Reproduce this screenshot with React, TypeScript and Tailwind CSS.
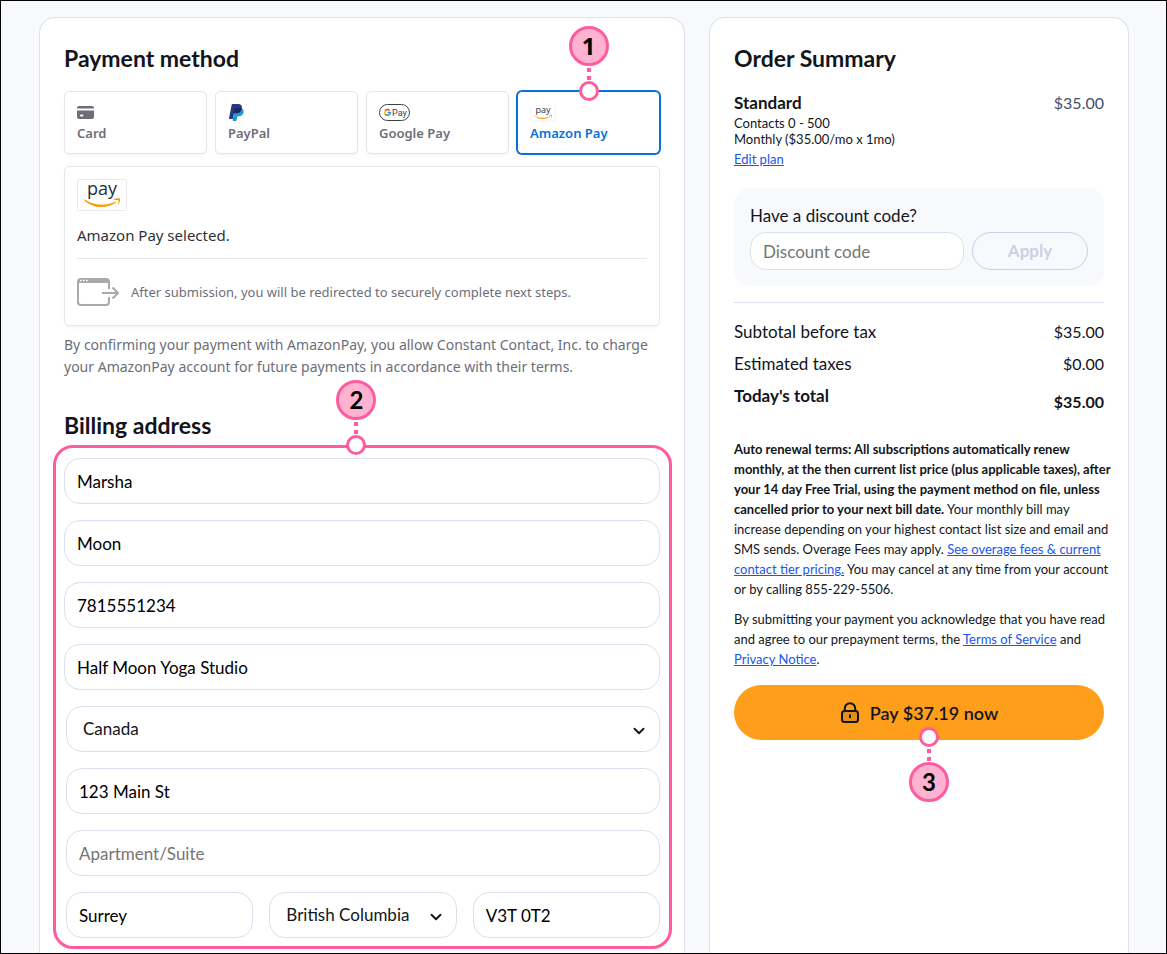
import type { ReactNode } from 'react';
import { ChevronDown } from 'lucide-react';

function CardIcon() {
  return (
    <svg width="17" height="13" viewBox="0 0 17 13" fill="#6d6e78">
      <path d="M2 0h13a2 2 0 0 1 2 2v0.6H0V2a2 2 0 0 1 2-2z" />
      <path fillRule="evenodd" d="M0 4.4h17V11a2 2 0 0 1-2 2H2a2 2 0 0 1-2-2zM4 8.6a1 1 0 0 0 0 2h1.400a1 1 0 0 0 0-2z" />
    </svg>
  );
}

function PayPalIcon() {
  return (
    <svg width="15" height="17" viewBox="0 0 15 17" className="ml-px">
      <path d="M12.6 4.2c1.7.8 2.3 2.3 1.9 4.3-.5 2.5-2.2 3.7-4.7 3.7H8.9c-.4 0-.7.3-.8.7l-.5 3.3c-.1.5-.4.8-.9.8H4.3c-.4 0-.6-.3-.6-.7L5 8z" fill="#189bd7" />
      <path d="M2.6 1C2.7.4 3.1 0 3.7 0h4.9c3.1 0 4.8 1.5 4.3 4.4-.6 3.2-2.5 4.8-5.6 4.8H5.6c-.4 0-.8.3-.9.8L3.8 15H.6c-.4 0-.6-.3-.6-.7z" fill="#243a80" />
      <path d="M5.6 5c.1-.6.5-1 1.100-1h3.800c.9 0 1.600.1 2.200.4-.6 3.200-2.400 4.700-5.500 4.700H5.600c-.3 0-.6.1-.8.4z" fill="#1f2665" />
    </svg>
  );
}

function GooglePayIcon() {
  return (
    <svg width="31" height="17" viewBox="0 0 31 17">
      <rect x="0.5" y="0.5" width="30" height="16" rx="8" fill="#fff" stroke="#3c4043" />
      <g fill="none" strokeWidth="1.5">
        <path d="M10.6 6.4A2.8 2.8 0 0 0 6.2 6.9" stroke="#ea4335" />
        <path d="M6.2 6.9A2.8 2.8 0 0 0 6.2 10.1" stroke="#fbbc04" />
        <path d="M6.2 10.1A2.8 2.8 0 0 0 10.3 10.7" stroke="#34a853" />
        <path d="M8.6 8.5H11.5A2.8 2.8 0 0 1 10.3 10.7" stroke="#4285f4" />
      </g>
      <text x="13" y="12" fontSize="9" fontWeight="400" fontFamily="Roboto, sans-serif" fill="#3c4043">Pay</text>
    </svg>
  );
}

function AmazonPayLogo({ className }: { className: string }) {
  return (
    <svg viewBox="0 0 50 32" overflow="visible" className={className}>
      <rect x="0.5" y="0.5" width="49" height="31" rx="1" fill="#fff" stroke="#e9e9eb" />
      <text x="10" y="16" fontSize="18" fontWeight="500" fontFamily="'Open Sans', sans-serif" fill="#232f3e">pay</text>
      <path d="M7.2 20.3c5.2 3.6 11 5.4 17.3 5.4 5 0 9.7-1 13.9-3 .7-.3 1.2.4.6.9-4 2.9-9 4.5-14.3 4.5-6.9 0-13-2.5-17.7-7.1-.4-.4 0-.9.2-.7z" fill="#ff9900" />
      <path d="M37 20.3c1.5-1.1 5.300-1.200 5.900-.7.6.7.1 4.300-1.600 6-.3.3-.6.1-.4-.3.5-1.200 1.100-3.300.7-3.900-.4-.6-2.900-.5-4.300-.5-.5 0-.6-.4-.3-.6z" fill="#ff9900" />
    </svg>
  );
}

function RedirectIcon() {
  return (
    <svg width="42" height="28" viewBox="0 0 42 28" fill="none" stroke="#a8a8ad" strokeWidth="2" className="shrink-0">
      <path d="M32 11V4a3 3 0 0 0-3-3H4a3 3 0 0 0-3 3v20a3 3 0 0 0 3 3h25a3 3 0 0 0 3-3v-5" />
      <path d="M1 5V3a2 2 0 0 1 2-2h27a2 2 0 0 1 2 2v2z" fill="#a8a8ad" stroke="none" />
      <path d="M3 2.500h1.600M6 2.500h1.600M9 2.500h1.600" stroke="#fff" strokeWidth="1.300" />
      <path d="M25 15h16M35.5 9.5 41 15l-5.5 5.5" />
    </svg>
  );
}

function LockIcon() {
  return (
    <svg width="20" height="22" viewBox="0 0 20 22" fill="none" stroke="#12151b" strokeWidth="2">
      <path d="M4.8 9V6.5a5.2 5.2 0 0 1 10.400 0V9" />
      <rect x="2" y="9" width="16" height="11" rx="2.5" fill="#e58e18" />
      <path d="M10 12.500v3.500" />
    </svg>
  );
}

const methods = [
  { name: 'Card', icon: <CardIcon />, selected: false },
  { name: 'PayPal', icon: <PayPalIcon />, selected: false },
  { name: 'Google Pay', icon: <GooglePayIcon />, selected: false },
  { name: 'Amazon Pay', icon: <AmazonPayLogo className="h-4 w-[26px]" />, selected: true },
];

function Marker({ n, up = false, className }: { n: number; up?: boolean; className: string }) {
  return (
    <div className={`pointer-events-none absolute flex -translate-x-1/2 items-center ${up ? 'flex-col-reverse' : 'flex-col'} ${className}`}>
      <div className="flex size-10 items-center justify-center rounded-full border-3 border-[#ff5c9f] bg-[#ffb3d1] text-2xl font-bold text-black">
        {n}
      </div>
      <div className="flex h-[15px] flex-col items-center justify-center gap-1">
        <span className="size-1 bg-[#ff5c9f]" />
        <span className="size-1 bg-[#ff5c9f]" />
      </div>
      <div className="size-5 rounded-full border-3 border-[#ff5c9f] bg-white" />
    </div>
  );
}

function Field({ label, value, placeholder }: { label: string; value?: string; placeholder?: string }) {
  return (
    <input
      type="text"
      aria-label={label}
      defaultValue={value}
      placeholder={placeholder}
      className="h-[46px] w-full min-w-0 rounded-2xl border border-[#dce0ec] bg-white px-3 text-[17px] text-black placeholder:text-[#757575]"
    />
  );
}

function SelectField({ label, value }: { label: string; value: string }) {
  return (
    <div className="relative">
      <select
        aria-label={label}
        className="h-[46px] w-full appearance-none rounded-2xl border border-[#dce0ec] bg-white pr-8 pl-4 text-[17px] text-[#12151b]"
      >
        <option>{value}</option>
      </select>
      <ChevronDown size={18} strokeWidth={2.5} className="pointer-events-none absolute top-4 right-3 text-[#12151b]" />
    </div>
  );
}

function TextLink({ children }: { children: ReactNode }) {
  return <a href="#" className="text-[#1856ed] underline">{children}</a>;
}

export default function App() {
  return (
    <div className="flex min-h-screen border border-black bg-[#f8f9fd] pt-4 pr-[37px] pl-[38px] font-[Lato,sans-serif] text-[#12151b]">
      <main className="grid w-full grid-cols-[1fr_420px] gap-6">
        <section className="rounded-t-2xl border border-b-0 border-[#dce0ec] bg-white px-6 pt-6 pb-1">
          <h2 className="text-[23px] leading-8 font-bold">Payment method</h2>

          <div className="font-['Noto_Sans',sans-serif]">
            <div className="mt-[17px] grid grid-cols-4 gap-2">
              {methods.map((m) => (
                <div key={m.name} className="relative">
                  <button
                    type="button"
                    aria-pressed={m.selected}
                    className={`flex h-[63px] w-full flex-col items-start rounded-[5px] border bg-white px-3 pt-3 text-[13px] leading-5 font-semibold ${
                      m.selected
                        ? 'border-[#0570de] text-[#0570de] ring-1 ring-[#0570de]'
                        : 'border-[#e6e6e6] text-[#6d6e78] shadow-[0_1px_1px_rgba(0,0,0,0.03),0_3px_6px_rgba(0,0,0,0.02)]'
                    }`}
                  >
                    <span className="flex h-[17px] items-center">{m.icon}</span>
                    <span className="mt-0.5">{m.name}</span>
                  </button>
                  {m.selected && <Marker n={1} className="-top-[65px] left-1/2" />}
                </div>
              ))}
            </div>

            <div className="mt-3 rounded-[5px] border border-[#e6e6e6] px-3 pt-3 pb-[19px] shadow-[0_1px_1px_rgba(0,0,0,0.03),0_3px_6px_rgba(0,0,0,0.02)]">
              <AmazonPayLogo className="h-8 w-[50px]" />
              <p className="mt-3 text-[15px] leading-6 text-[#30313d]">Amazon Pay selected.</p>
              <div className="mt-[11px] flex items-center gap-3 border-t border-[#e6e6e6] pt-[19px]">
                <RedirectIcon />
                <p className="text-[13px] leading-5 text-[#6d6e78]">
                  After submission, you will be redirected to securely complete next steps.
                </p>
              </div>
            </div>

            <p className="mt-2 text-[14px] leading-[22px] text-[#6d6e78]">
              By confirming your payment with AmazonPay, you allow Constant Contact, Inc. to charge your AmazonPay
              account for future payments in accordance with their terms.
            </p>
          </div>

          <h2 className="mt-[31px] text-[23px] leading-8 font-bold">Billing address</h2>

          <div className="relative mt-1 -mr-3 -ml-[11px] flex flex-col gap-4 rounded-[20px] border-3 border-[#ff5c9f] pt-2.5 pr-[9px] pb-2 pl-2">
            <Field label="First name" value="Marsha" />
            <Field label="Last name" value="Moon" />
            <Field label="Phone" value="7815551234" />
            <Field label="Company" value="Half Moon Yoga Studio" />
            <div className="flex flex-col gap-4 pl-0.5">
              <SelectField label="Country" value="Canada" />
              <Field label="Street address" value="123 Main St" />
              <Field label="Apartment or suite" placeholder="Apartment/Suite" />
              <div className="grid grid-cols-3 gap-4">
                <Field label="City" value="Surrey" />
                <SelectField label="Province" value="British Columbia" />
                <Field label="Postal code" value="V3T 0T2" />
              </div>
            </div>
            <Marker n={2} className="-top-[68px] left-[49%]" />
          </div>
        </section>

        <aside className="rounded-t-2xl border border-b-0 border-[#dce0ec] bg-white px-6 pt-6">
          <h2 className="text-[23px] leading-8 font-bold">Order Summary</h2>

          <div className="mt-[17px] flex justify-between text-[17px] leading-6">
            <h3 className="font-bold">Standard</h3>
            <span className="text-base text-[#475066]">$35.00</span>
          </div>
          <div className="text-[13px] leading-4">
            <p>Contacts 0 - 500</p>
            <p>Monthly ($35.00/mo x 1mo)</p>
            <p className="mt-1"><TextLink>Edit plan</TextLink></p>
          </div>

          <div className="mt-[21px] rounded-2xl bg-[#f8f9fd] p-4 text-[17px]">
            <label htmlFor="discount" className="block leading-6">Have a discount code?</label>
            <div className="mt-1 flex gap-2">
              <input
                id="discount"
                type="text"
                placeholder="Discount code"
                className="h-[38px] min-w-0 flex-1 rounded-2xl border border-[#dce0ec] bg-white px-3 placeholder:text-[#757575]"
              />
              <button type="button" disabled className="h-[38px] w-[116px] rounded-full border border-[#cbd0e2] font-bold text-[#cbd0e2]">
                Apply
              </button>
            </div>
          </div>

          <dl className="mt-4 grid grid-cols-[1fr_auto] gap-y-2 border-t border-[#dce0ec] pt-[17px] text-[17px] leading-6">
            <dt>Subtotal before tax</dt>
            <dd className="text-right text-base">$35.00</dd>
            <dt>Estimated taxes</dt>
            <dd className="text-right text-base">$0.00</dd>
            <dt className="font-bold">Today's total</dt>
            <dd className="pt-1.5 text-right text-base font-bold">$35.00</dd>
          </dl>

          <div className="-mr-2 mt-[25px] text-[13px] leading-5">
            <p>
              <strong>
                Auto renewal terms: All subscriptions automatically renew monthly, at the then current list price (plus
                applicable taxes), after your 14 day Free Trial, using the payment method on file, unless cancelled
                prior to your next bill date.
              </strong>{' '}
              Your monthly bill may increase depending on your highest contact list size and email and SMS sends.
              Overage Fees may apply. <TextLink>See overage fees &amp; current contact tier pricing.</TextLink> You may
              cancel at any time from your account or by calling 855-229-5506.
            </p>
            <p className="mt-2.5">
              By submitting your payment you acknowledge that you have read and agree to our prepayment terms, the{' '}
              <TextLink>Terms of Service</TextLink> and <TextLink>Privacy Notice</TextLink>.
            </p>
          </div>

          <div className="relative mt-4">
            <button type="button" className="flex h-[55px] w-full items-center justify-center gap-2.5 rounded-full bg-[#ff9e1b] text-lg font-semibold">
              <LockIcon />
              Pay $37.19 now
            </button>
            <Marker n={3} up className="top-[42px] left-[calc(50%+10px)]" />
          </div>
        </aside>
      </main>
    </div>
  );
}
